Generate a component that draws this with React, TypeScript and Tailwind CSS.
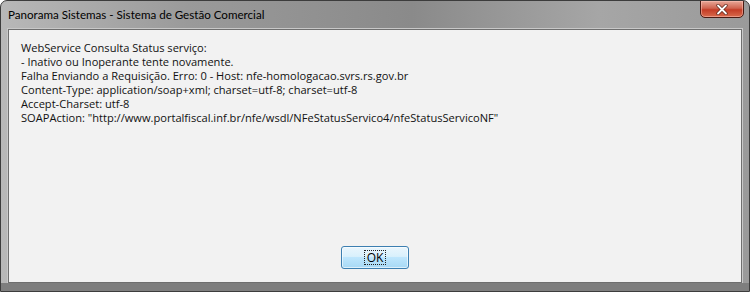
import React from "react";

export default function App() {
  const lines = [
    "WebService Consulta Status serviço:",
    "- Inativo ou Inoperante tente novamente.",
    "Falha Enviando a Requisição. Erro: 0 - Host: nfe-homologacao.svrs.rs.gov.br",
    "Content-Type: application/soap+xml; charset=utf-8; charset=utf-8",
    "Accept-Charset: utf-8",
    'SOAPAction: "http://www.portalfiscal.inf.br/nfe/wsdl/NFeStatusServico4/nfeStatusServicoNF"',
  ];
  return (
    <div
      className="w-[750px] h-[292px] flex flex-col rounded-t-[7px] border border-[#3c3c3c] bg-[linear-gradient(90deg,#b8b8b8_0%,#9a9a9a_25%,#8a8a8a_55%,#a6a6a6_80%,#9a9a9a_100%)] overflow-hidden"
      style={{ fontFamily: '"Open Sans", "Noto Sans", sans-serif' }}
    >
      <div className="h-[28px] flex items-start relative shrink-0">
        <div
          className="pl-[7px] pt-[6px] text-[11.6px] leading-[16px] text-black"
          style={{ fontFamily: 'Lato, "Open Sans", sans-serif' }}
        >
          Panorama Sistemas - Sistema de Gestão Comercial
        </div>
        <div className="ml-auto mr-[5px] w-[44px] h-[18px] -mt-[1px] rounded-b-[5px] border border-[#4a1a12] bg-[linear-gradient(180deg,#e8a898_0%,#d06450_45%,#c43c26_55%,#d86a4c_100%)] flex items-center justify-center shadow-[inset_0_0_0_1px_rgba(255,200,190,0.5)]">
          <svg width="12" height="11" viewBox="0 0 12 11">
            <path d="M2 1.5 L10 9.5 M10 1.5 L2 9.5" stroke="#5a2418" strokeWidth="3.2" strokeLinecap="round" />
            <path d="M2 1.5 L10 9.5 M10 1.5 L2 9.5" stroke="#ffffff" strokeWidth="1.8" strokeLinecap="round" />
          </svg>
        </div>
      </div>
      <div className="flex-1 mx-[7px] flex flex-col bg-[#f2f2f2] border border-[#6f6f6f] shadow-[0_0_0_1px_#c8c8c8]">
        <div className="pl-[12px] pt-[11px] text-[11.1px] leading-[14px] text-[#111]">
          {lines.map((l, i) => (
            <div key={i}>{l}</div>
          ))}
        </div>
        <div className="mt-auto mb-[13px] flex justify-center">
          <div className="w-[68px] h-[23px] rounded-[3px] border border-[#3c7fb1] bg-[linear-gradient(180deg,#eaf6fd_0%,#d9f0fc_45%,#bee6fd_50%,#a7d9f5_100%)] flex items-center justify-center shadow-[inset_0_0_0_1px_rgba(255,255,255,0.6)]">
            <div className="px-[2px] border border-dotted border-[#222] text-[12px] leading-[13px] text-black">
              OK
            </div>
          </div>
        </div>
      </div>
      <div className="h-[8px] shrink-0 bg-[#7e7e7e]" />
    </div>
  );
}
